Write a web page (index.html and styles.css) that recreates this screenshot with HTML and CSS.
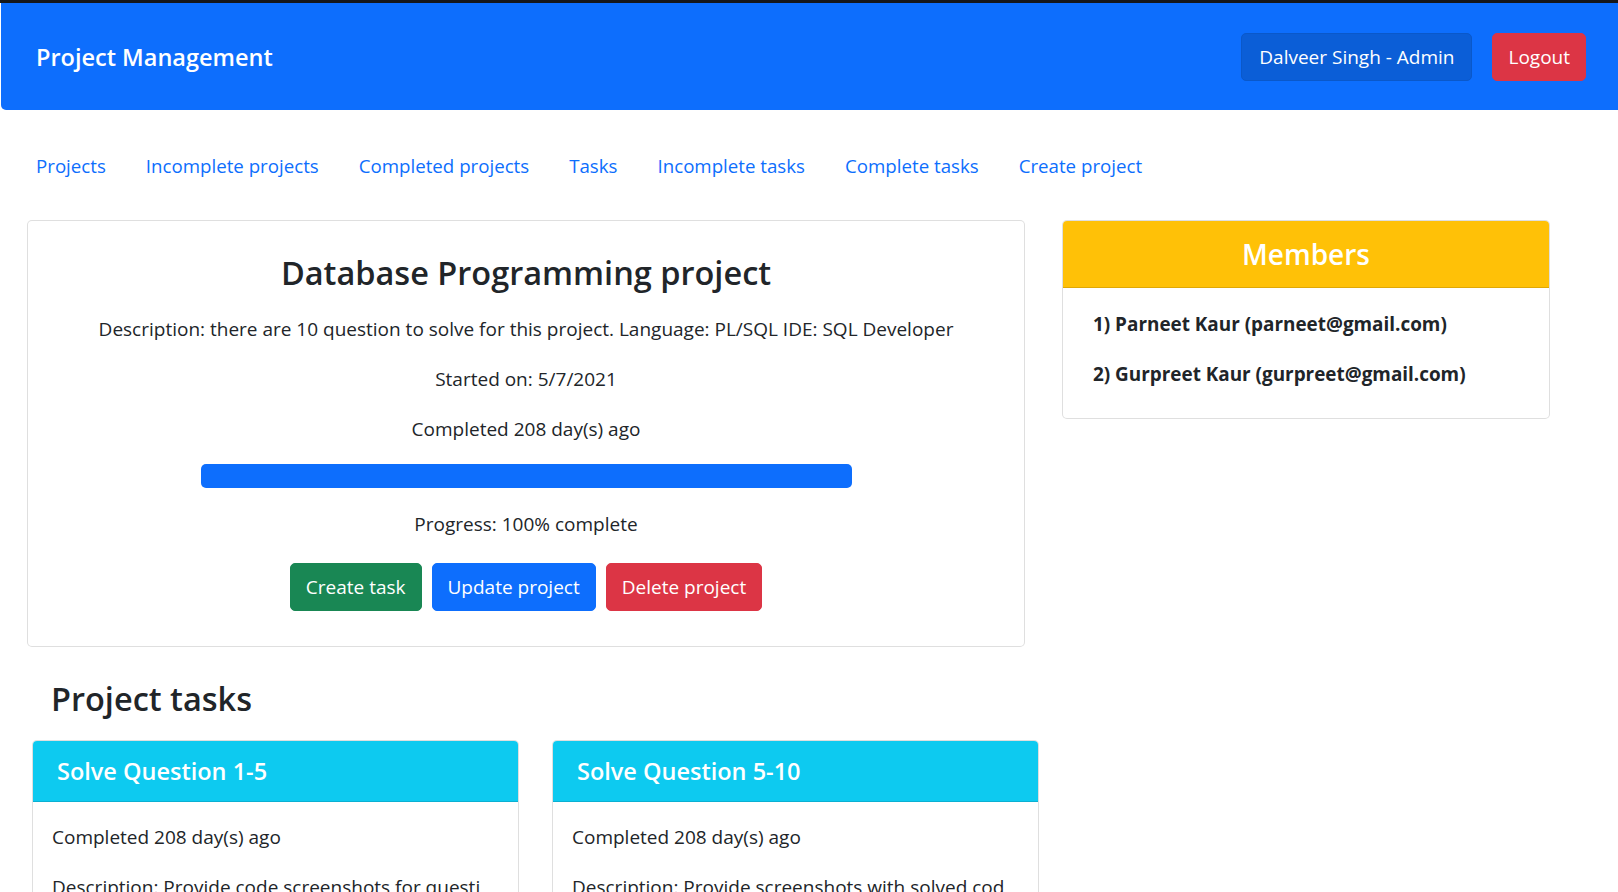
FILE: index.html
```html
<!DOCTYPE html>
<html lang="en">
<head>
<meta charset="utf-8">
<title>Project Management</title>
<link rel="stylesheet" href="styles.css">
</head>
<body>
<div class="topline"></div>
<header class="navbar">
  <a class="brand" href="#">Project Management</a>
  <div class="nav-actions">
    <button class="btn btn-admin">Dalveer Singh - Admin</button>
    <button class="btn btn-danger">Logout</button>
  </div>
</header>

<ul class="nav">
  <li><a href="#">Projects</a></li>
  <li><a href="#">Incomplete projects</a></li>
  <li><a href="#">Completed projects</a></li>
  <li><a href="#">Tasks</a></li>
  <li><a href="#">Incomplete tasks</a></li>
  <li><a href="#">Complete tasks</a></li>
  <li><a href="#">Create project</a></li>
</ul>

<main class="row">
  <section class="card project-card">
    <h3 class="project-title">Database Programming project</h3>
    <p>Description: there are 10 question to solve for this project. Language: PL/SQL IDE: SQL Developer</p>
    <p>Started on: 5/7/2021</p>
    <p>Completed 208 day(s) ago</p>
    <div class="progress"><div class="progress-bar" style="width:100%"></div></div>
    <p class="progress-text">Progress: 100% complete</p>
    <div class="actions">
      <button class="btn btn-success">Create task</button>
      <button class="btn btn-primary">Update project</button>
      <button class="btn btn-danger">Delete project</button>
    </div>
  </section>

  <aside class="card members-card">
    <h4 class="members-header">Members</h4>
    <div class="members-body">
      <p class="member">1) Parneet Kaur (parneet@gmail.com)</p>
      <p class="member">2) Gurpreet Kaur (gurpreet@gmail.com)</p>
    </div>
  </aside>
</main>

<section class="tasks">
  <h3 class="tasks-title">Project tasks</h3>
  <div class="task-grid">
    <div class="card task-card">
      <h5 class="task-header">Solve Question 1-5</h5>
      <div class="task-body">
        <p>Completed 208 day(s) ago</p>
        <p>Description: Provide code screenshots for questi</p>
      </div>
    </div>
    <div class="card task-card">
      <h5 class="task-header">Solve Question 5-10</h5>
      <div class="task-body">
        <p>Completed 208 day(s) ago</p>
        <p>Description: Provide screenshots with solved cod</p>
      </div>
    </div>
  </div>
</section>
</body>
</html>
```

FILE: styles.css
```css
* { box-sizing: border-box; }

html, body {
  margin: 0;
  padding: 0;
  background: #fff;
}

body {
  font-family: "Open Sans", "Noto Sans", sans-serif;
  font-size: 19px;
  line-height: 30px;
  color: #212529;
}

p { margin: 0 0 20px 0; }

.topline {
  height: 3px;
  background: #15171a;
}

.navbar {
  margin-left: 1px;
  height: 107px;
  background: #0d6efd;
  border-bottom-left-radius: 5px;
  display: flex;
  align-items: center;
  justify-content: space-between;
  padding: 0 32px 0 35px;
}

.brand {
  color: #fff;
  text-decoration: none;
  font-size: 23.5px;
  font-weight: 600;
  line-height: 36px;
}

.nav-actions {
  display: flex;
  gap: 20px;
}

.btn {
  font-family: inherit;
  font-size: 19px;
  line-height: 30px;
  padding: 8px 15px;
  border: 1px solid transparent;
  border-radius: 5px;
  color: #fff;
  cursor: pointer;
}

.btn-admin { background: #0b5ed7; border-color: #0a58ca; padding: 8px 17px; }
.btn-danger { background: #dc3545; border-color: #dc3545; }
.btn-success { background: #198754; border-color: #198754; }
.btn-primary { background: #0d6efd; border-color: #0d6efd; }

.nav {
  list-style: none;
  margin: 31px 0 0 0;
  padding: 0 0 0 16px;
  display: flex;
}

.nav a {
  display: block;
  padding: 10px 20px;
  color: #0d6efd;
  text-decoration: none;
  font-size: 18.7px;
  line-height: 30px;
}

.row {
  display: flex;
  align-items: flex-start;
  gap: 37px;
  margin-top: 29px;
  padding-left: 27px;
}

.card {
  background: #fff;
  border: 1px solid rgba(0, 0, 0, 0.125);
  border-radius: 5px;
}

.project-card {
  width: 998px;
  padding: 31px 20px 35px;
  text-align: center;
}

.project-title {
  margin: 0 0 20px;
  font-size: 32.5px;
  line-height: 42px;
  font-weight: 600;
}

.progress {
  width: 651px;
  height: 24px;
  margin: 0 auto 21px;
  background: #e9ecef;
  border-radius: 5px;
  overflow: hidden;
}

.progress-bar {
  height: 100%;
  background: #0d6efd;
}

.progress-text { margin-bottom: 24px; }

.actions {
  display: flex;
  justify-content: center;
  gap: 10px;
}

.members-card {
  width: 488px;
  overflow: hidden;
}

.members-header {
  margin: 0;
  background: #ffc107;
  color: #fff;
  text-align: center;
  font-size: 28px;
  line-height: 36px;
  font-weight: 600;
  padding: 15px 20px;
  border-bottom: 1px solid rgba(0, 0, 0, 0.125);
}

.members-body {
  padding: 21px 30px 9px;
}

.member {
  font-weight: 700;
  font-size: 18.9px;
}

.tasks {
  padding-left: 32px;
  margin-top: 32px;
}

.tasks-title {
  margin: 0 0 21px 19px;
  font-size: 32.5px;
  line-height: 40px;
  font-weight: 600;
}

.task-grid {
  display: grid;
  grid-template-columns: 487px 487px;
  gap: 33px;
}

.task-card { overflow: hidden; }

.task-header {
  margin: 0;
  background: #0dcaf0;
  color: #fff;
  font-size: 23.5px;
  line-height: 30px;
  font-weight: 600;
  padding: 15px 24px;
  border-bottom: 1px solid rgba(0, 0, 0, 0.125);
}

.task-body {
  padding: 20px 19px 0;
}
```
